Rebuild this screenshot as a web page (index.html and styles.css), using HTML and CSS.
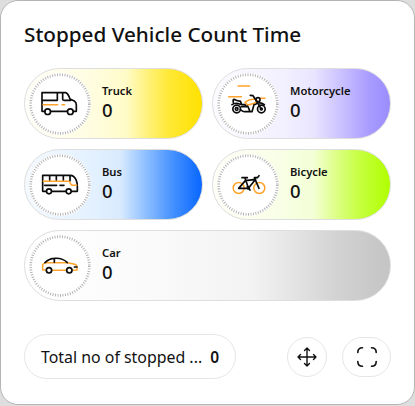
FILE: index.html
```html
<!DOCTYPE html>
<html lang="en">
<head>
<meta charset="utf-8">
<title>Stopped Vehicle Count Time</title>
<link rel="stylesheet" href="styles.css">
</head>
<body>
<main class="card">
  <h1 class="title">Stopped Vehicle Count Time</h1>
  <section class="grid">
    <article class="pill truck">
      <svg class="icon" viewBox="24 30 192 192">
        <circle class="disc" cx="120" cy="126" r="93"/><circle class="ring" cx="120" cy="126" r="88"/>
        <path d="M75 148H66V92H137Q144 94 150 111L163 117Q169 121 169 129V148H160M142 148H92M66 115H112V92M128 92V111Q128 115 132 115H152"/>
        <circle cx="83" cy="149" r="8.5"/><circle cx="151" cy="149" r="8.5"/>
        <path class="accent" d="M69 128H113M126 128H134"/>
      </svg>
      <div class="info"><span class="name">Truck</span><strong class="count">0</strong></div>
    </article>
    <article class="pill motorcycle">
      <svg class="icon" viewBox="18 30 192 192">
        <circle class="disc" cx="114" cy="126" r="93"/><circle class="ring" cx="114" cy="126" r="88"/>
        <path class="accent" d="M84 72H119M56 104H94M151 109H165M105 121Q120 109 136 112L143 118Q126 129 112 128Z"/>
        <circle cx="80" cy="141" r="11.5"/><circle cx="80" cy="141" r="4"/>
        <circle cx="154" cy="141" r="11.5"/><circle cx="154" cy="141" r="3"/>
        <path d="M66 128Q76 120 91 127L105 128L110 134H94M70 121Q68 113 72 112Q82 118 91 117L94 125M91 143Q101 150 104 149H126L132 128M113 132L119 146M121 100L129 101L137 113L154 141M136 127Q150 118 163 128"/>
        <circle cx="144" cy="113" r="6"/>
      </svg>
      <div class="info"><span class="name">Motorcycle</span><strong class="count">0</strong></div>
    </article>
    <article class="pill bus">
      <svg class="icon" viewBox="24 24 192 192">
        <circle class="disc" cx="120" cy="120" r="93"/><circle class="ring" cx="120" cy="120" r="88"/>
        <path d="M79 139H68V91H151Q162 91 168 104Q172 113 172 124V139H155M137 139H96M89 92V106M109 92V106M130 92V106M150 92V108M74 121H110M120 121H132"/>
        <path class="accent" d="M70 109H146Q149 109 151 115Q153 121 158 121H170"/>
        <circle cx="87" cy="139" r="7.5"/><circle cx="146" cy="139" r="7.5"/>
      </svg>
      <div class="info"><span class="name">Bus</span><strong class="count">0</strong></div>
    </article>
    <article class="pill bicycle">
      <svg class="icon" viewBox="18 24 192 192">
        <circle class="disc" cx="114" cy="120" r="93"/><circle class="ring" cx="114" cy="120" r="88"/>
        <circle class="accent" cx="86" cy="129" r="16.5"/><circle class="accent" cx="148" cy="129" r="16.5"/>
        <path d="M96 98H112M105 99L116 131M86 130L106 107L137 103L115 130H86M147 130L133 98H142L147 92M112 124L120 135"/>
        <circle cx="115" cy="129" r="3"/>
      </svg>
      <div class="info"><span class="name">Bicycle</span><strong class="count">0</strong></div>
    </article>
    <article class="pill car">
      <svg class="icon" viewBox="24 24 192 192">
        <circle class="disc" cx="120" cy="120" r="93"/><circle class="ring" cx="120" cy="120" r="88"/>
        <path class="accent" d="M77 133L68 131V115L77 110H141Q160 112 169 117Q173 124 171 132L158 133M138 133H96"/>
        <path d="M75 110Q88 97 103 97Q128 95 142 110M103 98V109M163 123H171"/>
        <circle cx="87" cy="133" r="8"/><circle cx="148" cy="133" r="8"/>
      </svg>
      <div class="info"><span class="name">Car</span><strong class="count">0</strong></div>
    </article>
  </section>
  <footer class="footer">
    <div class="total"><span class="total-label">Total no of stopped ...</span><strong class="total-count">0</strong></div>
    <button class="button move" aria-label="Move">
      <svg class="glyph" viewBox="0 0 20 20"><path d="M10 1V19M1 10H19M7.5 3.5L10 1L12.5 3.5M7.5 16.5L10 19L12.5 16.5M3.5 7.5L1 10L3.5 12.5M16.5 7.5L19 10L16.5 12.5"/></svg>
    </button>
    <button class="button expand" aria-label="Full screen">
      <svg class="glyph bold" viewBox="0 0 20 20"><path d="M.8 5.5Q.8 .8 5.5 .8M14.5 .8Q19.2 .8 19.2 5.5M19.2 14.5Q19.2 19.2 14.5 19.2M5.5 19.2Q.8 19.2 .8 14.5"/></svg>
    </button>
  </footer>
</main>
</body>
</html>
```
FILE: styles.css
```css
* { box-sizing: border-box; }
body {
  margin: 0;
  background: #dedede;
  font-family: "Noto Sans", "Open Sans", sans-serif;
  color: #111;
}
.card {
  width: 415px;
  height: 405px;
  padding: 19px 24px 25px;
  background: #fff;
  border: 1px solid #b5b5b5;
  border-radius: 18px;
  display: flex;
  flex-direction: column;
}
.title {
  margin: 0 0 20px -1px;
  font-size: 20.7px;
  line-height: 28px;
  font-weight: 500;
  white-space: nowrap;
}
.grid {
  display: grid;
  grid-template-columns: 178.5px 178.5px;
  grid-auto-rows: 71px;
  gap: 10px 9.5px;
  margin-left: -1px;
}
.pill {
  display: flex;
  align-items: center;
  gap: 10px;
  padding-left: 3px;
  border: 1px solid #dedede;
  border-radius: 36px;
}
.truck { background: linear-gradient(90deg, #fffffa 0%, #fffde0 38%, #fffbc8 57%, #fff176 70%, #ffe833 82%, #ffe100 100%); }
.motorcycle { background: linear-gradient(90deg, #fcfbff 0%, #f3f0ff 40%, #e9e5ff 57%, #c9c0ff 73%, #a99cff 88%, #9b8cff 100%); }
.bus { background: linear-gradient(90deg, #f5faff 0%, #e2f0ff 40%, #d9eaff 54%, #8fc0ff 68%, #438fff 84%, #0867ff 100%); }
.bicycle { background: linear-gradient(90deg, #fdfff8 0%, #f8ffe5 40%, #f3ffd5 57%, #dcff84 70%, #c4ff3a 84%, #b0ff00 100%); }
.car {
  grid-column: 1 / -1;
  background: linear-gradient(90deg, #fff 0%, #fafafa 35%, #f3f3f3 62%, #e5e5e5 73%, #d3d3d3 85%, #c4c4c4 100%);
}
.icon {
  width: 64px;
  height: 64px;
  flex: none;
  fill: none;
  stroke: #0b0b0b;
  stroke-width: 5;
  stroke-linecap: round;
  stroke-linejoin: round;
}
.icon .disc { fill: #fff; stroke: none; }
.icon .ring { stroke: #b4b4b4; stroke-width: 8; stroke-dasharray: 3 4.5; stroke-linecap: butt; }
.icon .accent { stroke: #ffa32b; stroke-width: 4.5; }
.info { display: flex; flex-direction: column; padding-bottom: 4px; }
.name { font-size: 11.2px; line-height: 16px; font-weight: 600; }
.count { font-size: 18.5px; line-height: 22px; font-weight: 500; }
.footer {
  margin-top: auto;
  margin-left: -1px;
  width: 367px;
  display: flex;
  align-items: center;
}
.total {
  width: 212px;
  height: 45px;
  padding: 0 16px;
  border: 1px solid #e6e6e6;
  border-radius: 23px;
  display: flex;
  align-items: center;
  justify-content: space-between;
  font-size: 15.9px;
  white-space: nowrap;
}
.total-count { font-size: 15.5px; font-weight: 600; }
.button {
  height: 40px;
  padding: 0;
  border: 1px solid #e6e6e6;
  border-radius: 20px;
  background: #fff;
  display: flex;
  align-items: center;
  justify-content: center;
}
.move { width: 40px; margin-left: 51px; }
.expand { width: 49px; margin-left: auto; }
.glyph {
  width: 20px;
  height: 20px;
  fill: none;
  stroke: #111;
  stroke-width: 1.4;
  stroke-linecap: round;
  stroke-linejoin: round;
}
.bold { stroke-width: 1.6; }
```
